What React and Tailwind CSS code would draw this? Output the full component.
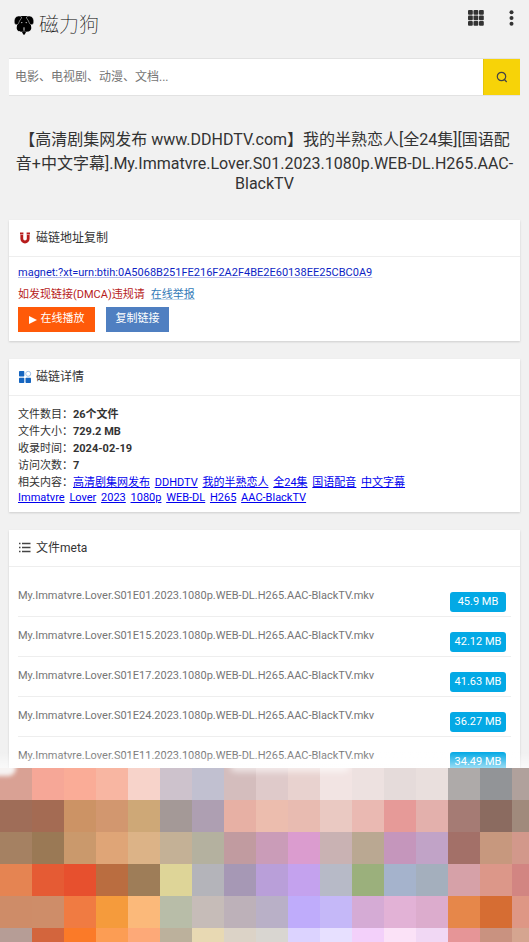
import React from "react";

const files = [
  ["S01E01", "45.9 MB"],
  ["S01E15", "42.12 MB"],
  ["S01E17", "41.63 MB"],
  ["S01E24", "36.27 MB"],
  ["S01E11", "34.49 MB"],
];

const tags = ["高清剧集网发布", "DDHDTV", "我的半熟恋人", "全24集", "国语配音", "中文字幕", "Immatvre", "Lover", "2023", "1080p", "WEB-DL", "H265", "AAC-BlackTV"];

const facts = [
  ["文件数目", "26个文件"],
  ["文件大小", "729.2 MB"],
  ["收录时间", "2024-02-19"],
  ["访问次数", "7"],
];

const mosaic = [
  ["#d9a194", "#f6a797", "#faac97", "#f8b6a2", "#f7d3ca", "#cdc2cc", "#c1c0d0", "#d4bdbd", "#dfcaca", "#e8d2cf", "#f2e4e3", "#ede1e0", "#e5dbda", "#e9dfdd", "#aeaaa9", "#929497", "#b0a19c"],
  ["#9f6d58", "#a46b53", "#cc9365", "#d2976f", "#cea877", "#a49997", "#ae9fb2", "#e7b0a4", "#ecbdae", "#e8bbb1", "#eac9c2", "#eab9b2", "#e69a98", "#e3b0ac", "#a57b74", "#8b6b60", "#a08a7c"],
  ["#a58162", "#9a7955", "#ca996c", "#dfa577", "#dcb387", "#c4b196", "#b4b19f", "#c19ba0", "#ca9cb8", "#db9ccf", "#c9b2b3", "#baa892", "#c596bc", "#c1a3c7", "#a37068", "#c7987e", "#d2988b"],
  ["#e58452", "#e55b34", "#e7502e", "#ba6d40", "#9e7d58", "#ded598", "#b4b4ba", "#a698b5", "#b99fd9", "#c4a2ee", "#b7bac7", "#9bb07c", "#a5b3cc", "#a4afbd", "#d6a1a8", "#dc9789", "#d28582"],
  ["#ce8c68", "#ce8d69", "#f07b42", "#f59b3c", "#fbb97a", "#b8bda8", "#c6bcb8", "#bdb1b9", "#b9b0c7", "#bfacfb", "#c5b8f8", "#d5abd5", "#e2b2d6", "#dcaccd", "#e6874a", "#d66d33", "#de9785"],
  ["#b69d96", "#d3653d", "#fb7a28", "#fc9d54", "#fda978", "#bcb19c", "#e8d9b3", "#dcd3c7", "#d9d6d1", "#dcd3ff", "#e7e0ff", "#f3d0fa", "#fbe2f7", "#f1d8f4", "#e69597", "#c99280", "#d5a590"],
];

function Dog() {
  return (
    <svg viewBox="0 0 20 20" className="h-5 w-5" aria-hidden="true">
      <path d="M6.500 1h7l3 6.500.7 4.500c.6 3-1.700 4.700-4.200 4.700H7C4.500 16.700 2.200 15 2.800 12l.7-4.500Z" />
      <path d="M7.500 2C6 .2 2.500.6 1 3.200-.4 5.800.2 9.500 2 9.800c2.200.3 2.700-2 3.500-3.800C6.200 4.400 8 3.300 7.500 2ZM12.500 2c1.500-1.800 5-1.400 6.500 1.200 1.400 2.600.8 6.300-1 6.600-2.200.3-2.700-2-3.500-3.800C13.800 4.400 12 3.300 12.500 2Z" stroke="#f1f1f1" strokeWidth=".5" />
      <path d="M8 17.200c1-.6 3-.6 4 0l-1.200 2c-.4.7-1.200.7-1.600 0Z" />
      <path d="M10 12.300v3.400" fill="none" stroke="#f1f1f1" strokeWidth=".9" />
      <circle cx="7.800" cy="7.600" r=".6" fill="#f1f1f1" />
      <circle cx="12.200" cy="7.600" r=".6" fill="#f1f1f1" />
    </svg>
  );
}

function Magnet() {
  return (
    <svg viewBox="0 0 14 14" className="h-3.5 w-3.5" aria-hidden="true">
      <path d="M3.800 4v3.800a3.200 3.200 0 0 0 6.400 0V4" fill="none" stroke="#b71c1c" strokeWidth="2.800" />
      <path d="M2 1.500h3.400v2H2ZM8.600 1.500H12v2H8.600Z" fill="#b71c1c" />
    </svg>
  );
}

function Tiles() {
  return (
    <svg viewBox="0 0 14 14" className="h-3.5 w-3.5" aria-hidden="true">
      <g fill="#1565c0">
        <rect x="1" y="1" width="5.300" height="5.500" rx=".7" />
        <rect x="1" y="7.700" width="5.300" height="5.300" rx=".7" />
        <rect x="7.500" y="7.700" width="5.500" height="5.300" rx=".7" />
      </g>
      <circle cx="10.200" cy="3.800" r="2.500" fill="none" stroke="#8bb4e3" strokeWidth=".8" />
    </svg>
  );
}

function Lines() {
  return (
    <svg viewBox="0 0 14 14" className="h-3.5 w-3.5" aria-hidden="true">
      <path d="M1 2.500h1.500M4 2.500h8.500M1 6.500h1.500M4 6.500h8.500M1 10.500h1.500M4 10.500h8.500" stroke="#444" strokeWidth="1.300" />
    </svg>
  );
}

function Card({ icon, title, children }) {
  return (
    <section className="mb-[18px] bg-white shadow-[0_1px_2px_rgba(0,0,0,0.15)]">
      <h2 className="flex h-[37px] items-center gap-1 border-b border-[#eeeeee] px-[9px] text-[12px] text-[#333]">
        {icon}
        <span>{title}</span>
      </h2>
      {children}
    </section>
  );
}

export default function App() {
  return (
    <div className="min-h-screen overflow-hidden bg-[#f1f1f1] px-[9px] font-[Roboto,'Noto_Sans_CJK_SC',sans-serif] text-[11px] text-[#333]">
      <header className="flex h-[58px] justify-between pl-[5px]">
        <a href="#home" className="flex h-[50px] items-center gap-[5px] text-[20px] font-thin text-black">
          <Dog />
          <span>磁力狗</span>
        </a>
        <nav className="flex h-9 items-center gap-5">
          <button type="button" aria-label="应用">
            <svg viewBox="0 0 16 16" className="h-4 w-4" fill="#333">
              {[0, 5.5, 11].map((y) => [0, 5.5, 11].map((x) => <rect key={`${x}-${y}`} x={x} y={y} width="4.800" height="4.800" rx="1" />))}
            </svg>
          </button>
          <button type="button" aria-label="菜单">
            <svg viewBox="0 0 16 16" className="h-4 w-4" fill="#333">
              <circle cx="7.500" cy="2.300" r="2" />
              <circle cx="7.500" cy="8" r="2" />
              <circle cx="7.500" cy="13.700" r="2" />
            </svg>
          </button>
        </nav>
      </header>

      <form className="flex h-[38px] border-y border-[#e2e2e2]" onSubmit={(e) => e.preventDefault()}>
        <input aria-label="搜索" placeholder="电影、电视剧、动漫、文档..." className="min-w-0 flex-1 bg-white px-1.5 text-[12px] outline-none placeholder:text-[#757575]" />
        <button type="submit" aria-label="搜索" className="flex w-[37px] items-center justify-center border-l border-[#e5c60a] bg-[#f7d308]">
          <svg viewBox="0 0 12 12" className="h-3 w-3" fill="none" stroke="#444" strokeWidth="1.200">
            <circle cx="5.500" cy="5.500" r="4.200" />
            <path d="M8 8l2.700 3" />
          </svg>
        </button>
      </form>

      <h1 className="px-[5px] pt-[30px] pb-[27px] text-center text-[16px] leading-[normal]">
        【高清剧集网发布 www.DDHDTV.com】我的半熟恋人[全24集][国语配音+中文字幕].My.Immatvre.Lover.S01.2023.1080p.WEB-DL.H265.AAC-BlackTV
      </h1>

      <Card icon={<Magnet />} title="磁链地址复制">
        <div className="px-[9px] pt-2 pb-[9px]">
          <a href="#magnet" className="block leading-4 break-all text-[#0d1fc4] underline decoration-[#b9bdec]">
            magnet:?xt=urn:btih:0A5068B251FE216F2A2F4BE2E60138EE25CBC0A9
          </a>
          <p className="mt-[5px] flex gap-1.5 leading-[18px] text-[#b71c1c]">
            如发现链接(DMCA)违规请
            <a href="#report" className="text-[#337ab7] underline decoration-[#c3d8ea]">在线举报</a>
          </p>
          <div className="mt-[3px] flex gap-[11px] text-white">
            <button type="button" className="flex h-[25px] w-[77px] items-center justify-center gap-1 bg-[#ff5a09]">
              <svg viewBox="0 0 8 8" className="h-2 w-2" fill="white"><path d="M0 0l8 4-8 4z" /></svg>
              在线播放
            </button>
            <button type="button" className="h-[25px] w-[63px] bg-[#4f7fc1]">复制链接</button>
          </div>
        </div>
      </Card>

      <Card icon={<Tiles />} title="磁链详情">
        <div className="px-[9px] pt-[10px] pb-[7px]">
          {facts.map(([k, v]) => (
            <p key={k} className="leading-[17px]">{k}：<b>{v}</b></p>
          ))}
          <p className="max-w-[412px] pt-px leading-[15px]">
            相关内容：
            {tags.map((t) => (
              <React.Fragment key={t}><a href="#tag" className="mr-[2px] whitespace-nowrap text-[#0000ee] underline">{t}</a> </React.Fragment>
            ))}
          </p>
        </div>
      </Card>

      <Card icon={<Lines />} title="文件meta">
        <ul className="px-[9px] pt-[10px]">
          {files.map(([ep, size]) => (
            <li key={ep} className="flex h-10 justify-between border-b border-[#eeeeee]">
              <span className="pt-[11px] text-[#757575]">My.Immatvre.Lover.{ep}.2023.1080p.WEB-DL.H265.AAC-BlackTV.mkv</span>
              <span className="mt-[15px] mr-[5px] h-5 w-14 rounded-[3px] bg-[#03a9e5] text-center leading-5 text-white">{size}</span>
            </li>
          ))}
        </ul>
      </Card>

      <div className="fixed inset-x-0 bottom-0">
        <div className="h-4 bg-linear-to-b from-white/0 to-white/60" />
        <div className="relative h-[174px] overflow-hidden">
          {mosaic.map((row, i) => (
            <div key={i} className="flex h-8">
              {row.map((c, j) => (
                <span key={j} className="h-8 w-8 shrink-0" style={{ backgroundColor: c }} />
              ))}
            </div>
          ))}
          <span className="absolute -top-2 -left-5 h-4 w-9 rounded-full bg-[#f6f3f2] blur-[2px]" />
          <span className="absolute -top-2 left-[230px] h-3 w-[120px] rounded-full bg-white/60 blur-[3px]" />
        </div>
      </div>
    </div>
  );
}
